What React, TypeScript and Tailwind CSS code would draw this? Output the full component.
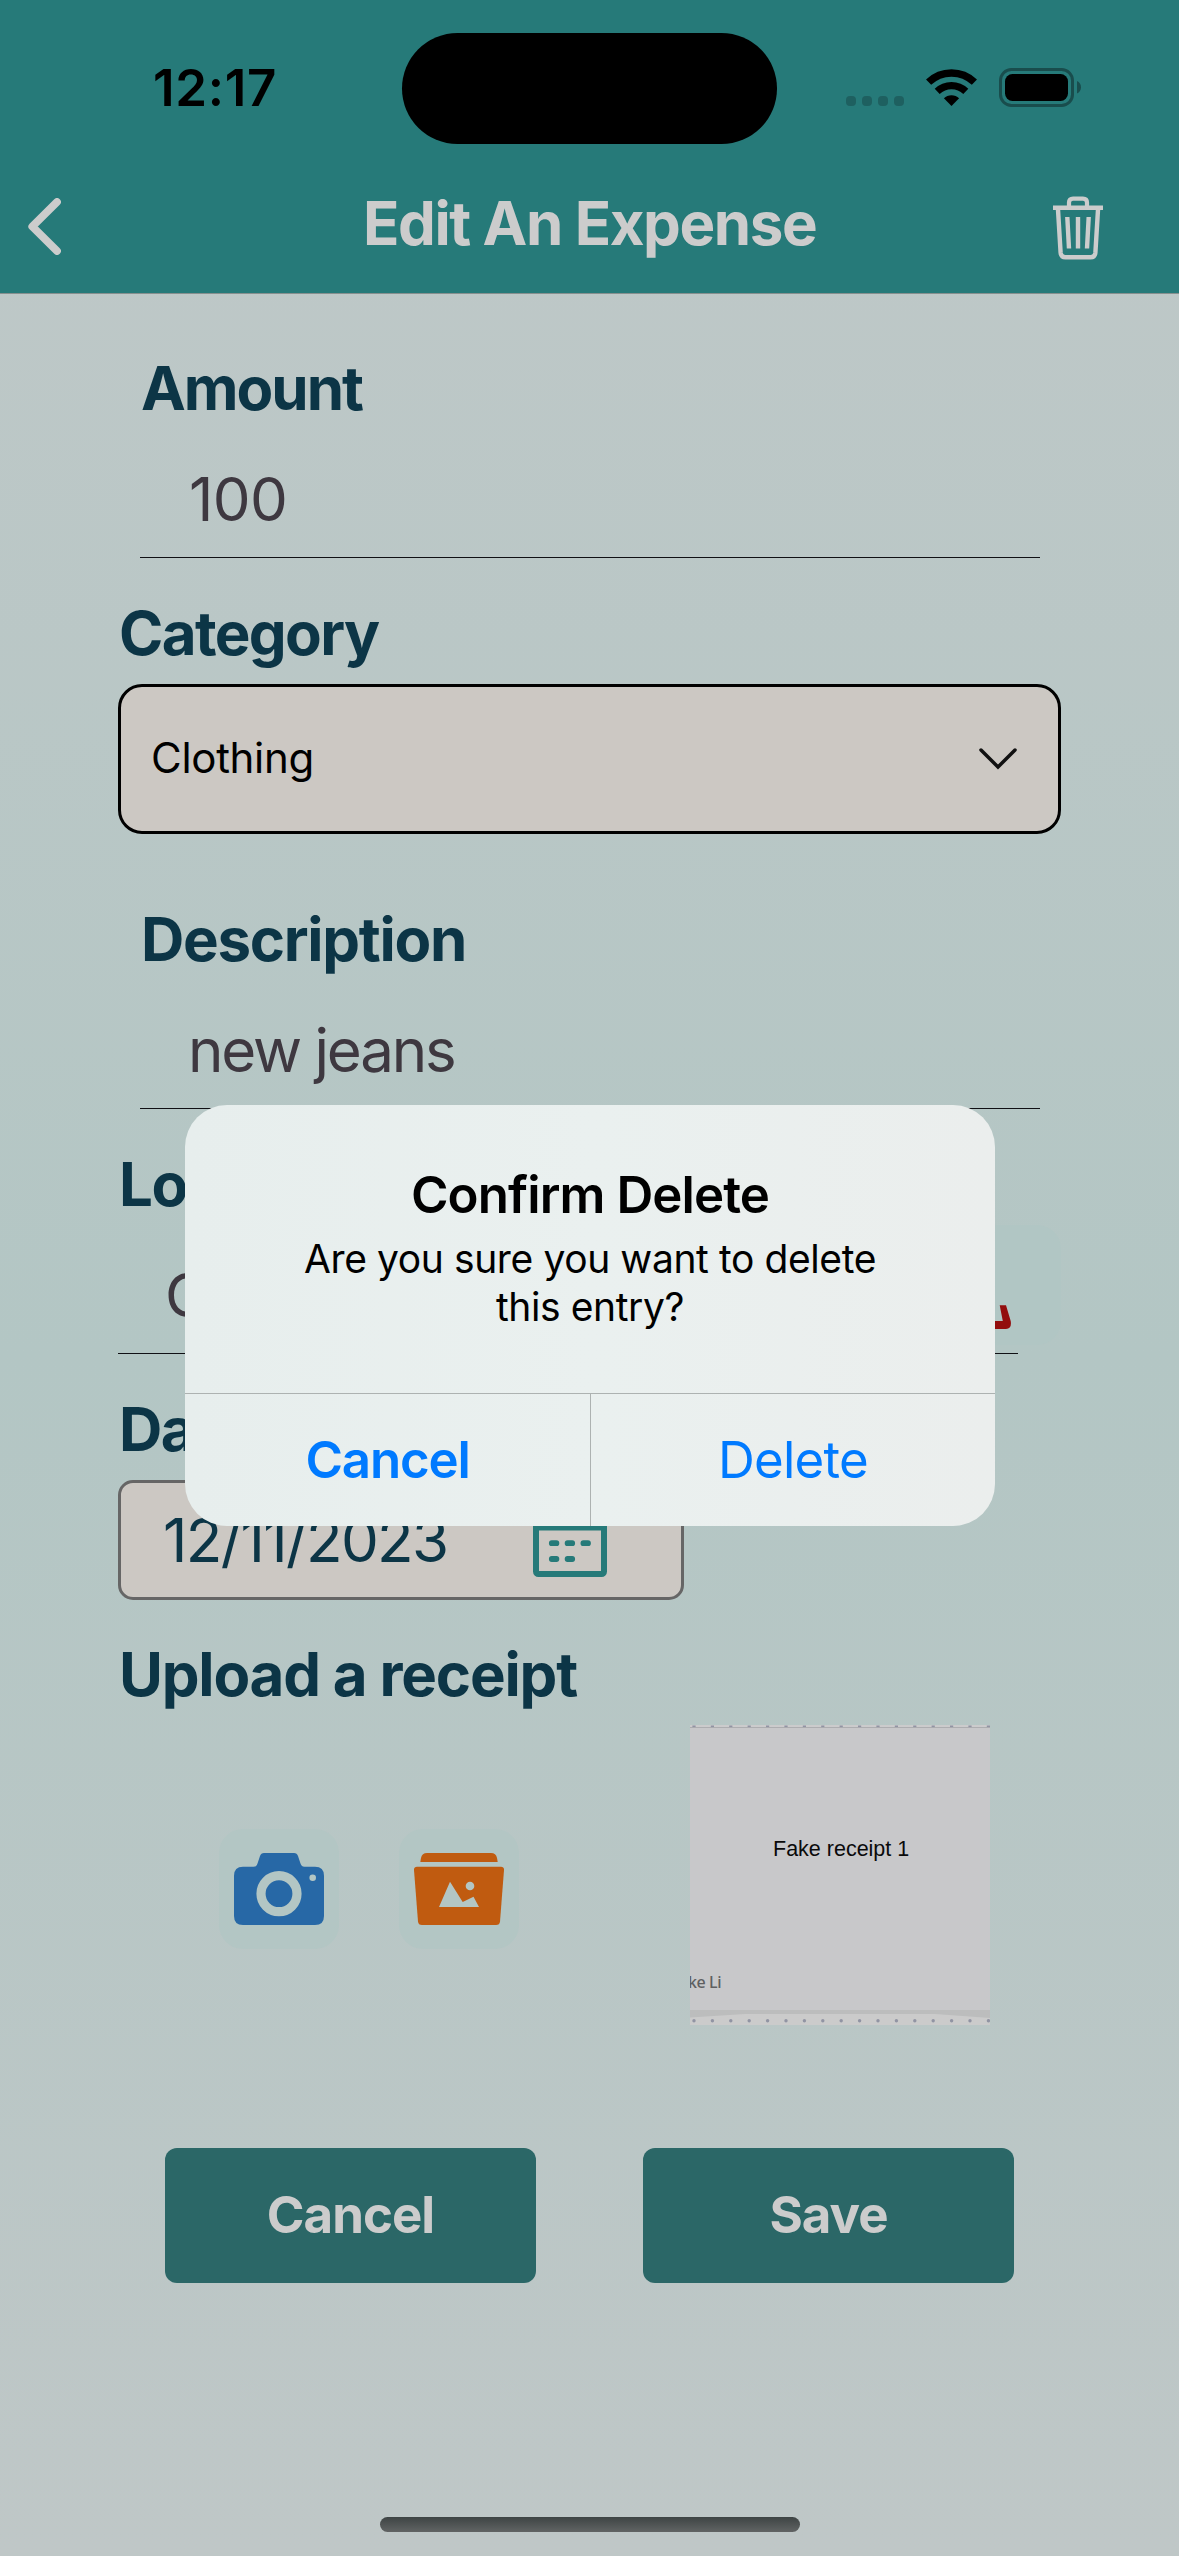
import type { ReactNode } from "react";

function StatusBar() {
  return (
    <div className="flex h-[177px] w-full items-start">
      <div className="mt-[52px] ml-[153px] w-[249px] text-[51px] leading-[72px] font-semibold tracking-[0.7px] text-black">
        12:17
      </div>
      <div className="mt-[33px] h-[111px] w-[375px] rounded-full bg-black" />
      <div className="mt-[96px] ml-[69px] flex gap-[6px]">
        <i className="size-[10px] rounded-[4px] bg-[#1e6060]" />
        <i className="size-[10px] rounded-[4px] bg-[#1e6060]" />
        <i className="size-[10px] rounded-[4px] bg-[#1e6060]" />
        <i className="size-[10px] rounded-[4px] bg-[#1e6060]" />
      </div>
      <svg className="mt-[69px] ml-[22px] h-[37px] w-[51px]" viewBox="0 0 51 37" fill="none">
        <path d="M2.6 13.2a33 33 0 0 1 45.8 0" stroke="#000" strokeWidth="7.4" />
        <path d="M11.2 22.4a20.6 20.6 0 0 1 28.6 0" stroke="#000" strokeWidth="7.2" />
        <path d="M25.5 37l-7.6-7.7a10.8 10.8 0 0 1 15.2 0z" fill="#000" />
      </svg>
      <svg className="mt-[68px] ml-[22px] h-[39px] w-[82px]" viewBox="0 0 82 39">
        <rect x="1.5" y="1.5" width="72" height="36" rx="11" fill="none" stroke="#194d4d" strokeWidth="3" />
        <rect x="6" y="6" width="63" height="27" rx="7.5" fill="#000" />
        <path d="M78 13v12.500c2.500-1 4-3.300 4-6.200s-1.500-5.200-4-6.300z" fill="#194d4d" />
      </svg>
    </div>
  );
}

function NavBar() {
  return (
    <div className="flex h-[116px] w-full items-start">
      <svg className="mt-[21px] ml-[28px] h-[57px] w-[33px]" viewBox="0 0 33 57" fill="none">
        <path d="M29 4L4.300 28.500L29 53" stroke="#cccccc" strokeWidth="7.800" strokeLinecap="round" strokeLinejoin="round" />
      </svg>
      <h1 className="mt-[10px] ml-[302px] w-[690px] text-[60px] leading-[72px] font-bold tracking-[-1.42px] whitespace-nowrap text-[#cccccc]">
        Edit An Expense
      </h1>
      <svg className="mt-[19px] h-[64px] w-[50px]" viewBox="0 0 50 64" fill="none" stroke="#cccccc">
        <path d="M0 11.800H50" strokeWidth="4.400" />
        <path d="M16 10.500V6.500Q16 2.600 20 2.600H30Q34 2.600 34 6.500V10.500" strokeWidth="4.200" />
        <path d="M4.900 12L7.600 56.500Q8 61.300 12.500 61.300H37.500Q42 61.300 42.400 56.500L45.100 12" strokeWidth="4.400" />
        <path d="M14.300 21L16 52.500M25 21V52.500M35.700 21L34 52.500" strokeWidth="4.400" />
      </svg>
    </div>
  );
}

function Label({ className, children }: { className: string; children: ReactNode }) {
  return (
    <div className={`h-[72px] text-[60px] leading-[73px] font-bold whitespace-nowrap text-[#0c3546] ${className}`}>
      {children}
    </div>
  );
}

function Field({ className, children }: { className: string; children: ReactNode }) {
  return (
    <div
      className={`h-[134px] w-[900px] border-b border-[#101014] pt-[39px] text-[60px] leading-[73px] whitespace-nowrap text-[#3e3840] ${className}`}
    >
      {children}
    </div>
  );
}

function CalendarIcon() {
  return (
    <svg className="h-[75px] w-[74px]" viewBox="0 0 74 75" fill="none">
      <rect x="3" y="7" width="68" height="64" rx="2.500" stroke="#267a79" strokeWidth="6" />
      <path d="M3 25H71" stroke="#267a79" strokeWidth="5" />
      <path d="M20 0V14M54 0V14" stroke="#267a79" strokeWidth="6" />
      <path d="M18.800 40.200H23.400M34.600 40.200H39.200M50.400 40.200H55M18.800 56H23.400M34.600 56H39.200" stroke="#267a79" strokeWidth="5.800" strokeLinecap="round" />
    </svg>
  );
}

function CameraIcon() {
  return (
    <svg className="h-[72px] w-[90px]" viewBox="0 0 90 72">
      <path
        d="M9 13.700H19.500C22 13.700 22.800 12.500 23.500 10.500L26 3Q27 0 30 0H60Q63 0 64 3L66.500 10.500C67.200 12.500 68 13.700 70.500 13.700H81Q90 13.700 90 22.700V63Q90 72 81 72H9Q0 72 0 63V22.700Q0 13.700 9 13.700Z"
        fill="#2768a6"
      />
      <circle cx="45" cy="40.700" r="18" fill="none" stroke="#b3c6c4" strokeWidth="9.200" />
      <circle cx="78.700" cy="24.800" r="3.300" fill="#b3c6c4" />
    </svg>
  );
}

function PhotosIcon() {
  return (
    <svg className="h-[72px] w-[90px]" viewBox="0 0 90 72">
      <path d="M6.300 9L7 5Q8 0 13 0H77Q82 0 83 5L83.700 9Z" fill="#c05b10" />
      <path d="M3 13.700H87Q90.200 13.700 90 17L86 68.500Q85.700 72 82 72H8Q4.300 72 4 68.500L0 17Q-0.200 13.700 3 13.700Z" fill="#c05b10" />
      <path d="M25 54L36 28.700L48.700 49L59.500 43.700L65 54Z" fill="#b3c6c4" />
      <circle cx="56" cy="33" r="4.300" fill="#b3c6c4" />
    </svg>
  );
}

function MapPinIcon() {
  return (
    <svg className="h-[90px] w-[74px]" viewBox="0 0 74 90">
      <path d="M37 0C26 0 18 9 18 21C18 36 37 60 37 60S56 36 56 21C56 9 48 0 37 0Z" fill="#930d0d" />
      <path
        d="M11.300 65.300H5L0.500 81Q-1 89 5 89H69Q75 89 73.700 81L69 65.300H62.700L65.800 81H8.200Z"
        fill="#930d0d"
      />
    </svg>
  );
}

const DOTS = Array.from({ length: 17 }, (_, i) => 4 + i * 18.4);

function Receipt() {
  return (
    <div className="relative size-[300px] overflow-hidden bg-[#c8c8ca]">
      <svg className="absolute inset-0 size-[300px]" viewBox="0 0 300 300">
        <rect width="300" height="2.500" fill="#cbcbcc" />
        <rect y="2" width="300" height="1" fill="#adadb0" />
        <rect y="285" width="300" height="15" fill="#cbcbcb" />
        <path d="M0 285H300V293L245 289H55L0 292.500Z" fill="#bcbdbd" />
        {DOTS.map((x) => (
          <g key={x} fill="#9194a3">
            <rect x={x - 1.6} y="0.500" width="3.200" height="1.600" />
            <circle cx={x} cy="295.700" r="1.700" />
          </g>
        ))}
      </svg>
      <span className="absolute top-[111px] left-[83px] font-['Liberation_Sans',sans-serif] text-[21.5px] leading-[26px] whitespace-nowrap text-[#0a0a0a]">
        Fake receipt 1
      </span>
      <span className="absolute top-[246px] -left-[2px] font-['Noto_Sans',sans-serif] text-[16px] leading-[22px] font-medium tracking-[-0.4px] whitespace-nowrap text-[#5e5f61]">
        ke Li
      </span>
    </div>
  );
}

function ConfirmDialog() {
  return (
    <div className="absolute top-[1105px] left-[185px] flex h-[421px] w-[810px] flex-col overflow-hidden rounded-[42px] bg-linear-to-r from-[#e7eeed] via-[#eaf0ef] to-[#ebeeed]">
      <div className="flex h-[288px] flex-col items-center pt-[54px]">
        <h2 className="text-[51px] leading-[72px] font-semibold tracking-[-0.91px] text-black">Confirm Delete</h2>
        <p className="mt-[4px] text-center text-[39px] leading-[48px] tracking-[-0.4px] text-black">
          Are you sure you want to delete
          <br />
          this entry?
        </p>
      </div>
      <div className="flex h-[133px] border-t border-[#adb2b1] text-[51px] leading-[132px] text-[#007aff]">
        <button className="w-[406px] border-r border-[#adb2b1] font-semibold tracking-[-1.19px]">Cancel</button>
        <button className="flex-1 tracking-[-0.76px]">Delete</button>
      </div>
    </div>
  );
}

export default function App() {
  return (
    <div className="relative h-[2556px] w-[1179px] overflow-hidden bg-linear-to-b from-[#c0c8c8] via-[#b3c6c4] via-53% to-[#bfc7c7] font-[Inter,sans-serif]">
      <header className="h-[294px] border-b border-[#87908f] bg-[#267a79]">
        <StatusBar />
        <NavBar />
      </header>

      <main className="flex flex-col items-start">
        <Label className="mt-[58px] ml-[141px] tracking-[-2px]">Amount</Label>
        <Field className="ml-[140px] pl-[49px] tracking-[-0.63px]">100</Field>

        <Label className="mt-[39px] ml-[119px] tracking-[-1.63px]">Category</Label>
        <div className="mt-[15px] ml-[118px] flex h-[150px] w-[943px] items-center justify-between rounded-[24px] border-[3px] border-black bg-[#ccc8c3] pr-[41px] pl-[30px]">
          <span className="pb-[2px] text-[42px] leading-[60px] tracking-[-0.3px] text-black">Clothing</span>
          <svg className="h-[22px] w-[38px]" viewBox="0 0 38 22" fill="none">
            <path d="M2 2L19 19L36 2" stroke="#111111" strokeWidth="3.500" strokeLinecap="round" />
          </svg>
        </div>

        <Label className="mt-[69px] ml-[141px] tracking-[-1.3px]">Description</Label>
        <Field className="ml-[140px] pl-[48px] tracking-[-2.2px]">new jeans</Field>

        <Label className="mt-[39px] ml-[119px] tracking-[-1.5px]">Location</Label>
        <div className="flex h-[134px]">
          <Field className="ml-[118px] pl-[47px]">C</Field>
          <div className="mt-[5px] -ml-[107px] flex h-[120px] w-[150px] items-center rounded-[24px] bg-[#b1c6c4] pl-[26px]">
            <MapPinIcon />
          </div>
        </div>

        <Label className="mt-[39px] ml-[119px] tracking-[-1.5px]">Date</Label>
        <div className="mt-[15px] ml-[118px] flex h-[120px] w-[566px] items-center justify-between rounded-[15px] border-[3px] border-[#666666] bg-[#ccc8c3] pr-[74px] pl-[42px]">
          <span className="text-[60px] leading-[73px] tracking-[-1.68px] text-[#0c3546]">12/11/2023</span>
          <CalendarIcon />
        </div>

        <Label className="mt-[38px] ml-[119px] tracking-[-1.2px]">Upload a receipt</Label>
        <div className="mt-[15px] ml-[219px] flex h-[300px] items-start">
          <div className="mt-[104px] flex size-[120px] items-center justify-center rounded-[24px] bg-[#b3c6c4]">
            <CameraIcon />
          </div>
          <div className="mt-[104px] ml-[60px] flex size-[120px] items-center justify-center rounded-[24px] bg-[#b3c6c4]">
            <PhotosIcon />
          </div>
          <div className="ml-[171px]">
            <Receipt />
          </div>
        </div>

        <div className="mt-[123px] ml-[165px] flex gap-[107px] text-[51px] leading-[133px] font-bold tracking-[-1px] text-[#cccccc]">
          <button className="h-[135px] w-[371px] rounded-[12px] bg-[#2b6767] pb-[2px]">Cancel</button>
          <button className="h-[135px] w-[371px] rounded-[12px] bg-[#2b6767] pb-[2px]">Save</button>
        </div>
      </main>

      <ConfirmDialog />
      <div className="absolute top-[2517px] left-[380px] h-[15px] w-[420px] rounded-full bg-linear-to-b from-[#3e4444] to-[#616464]" />
    </div>
  );
}
